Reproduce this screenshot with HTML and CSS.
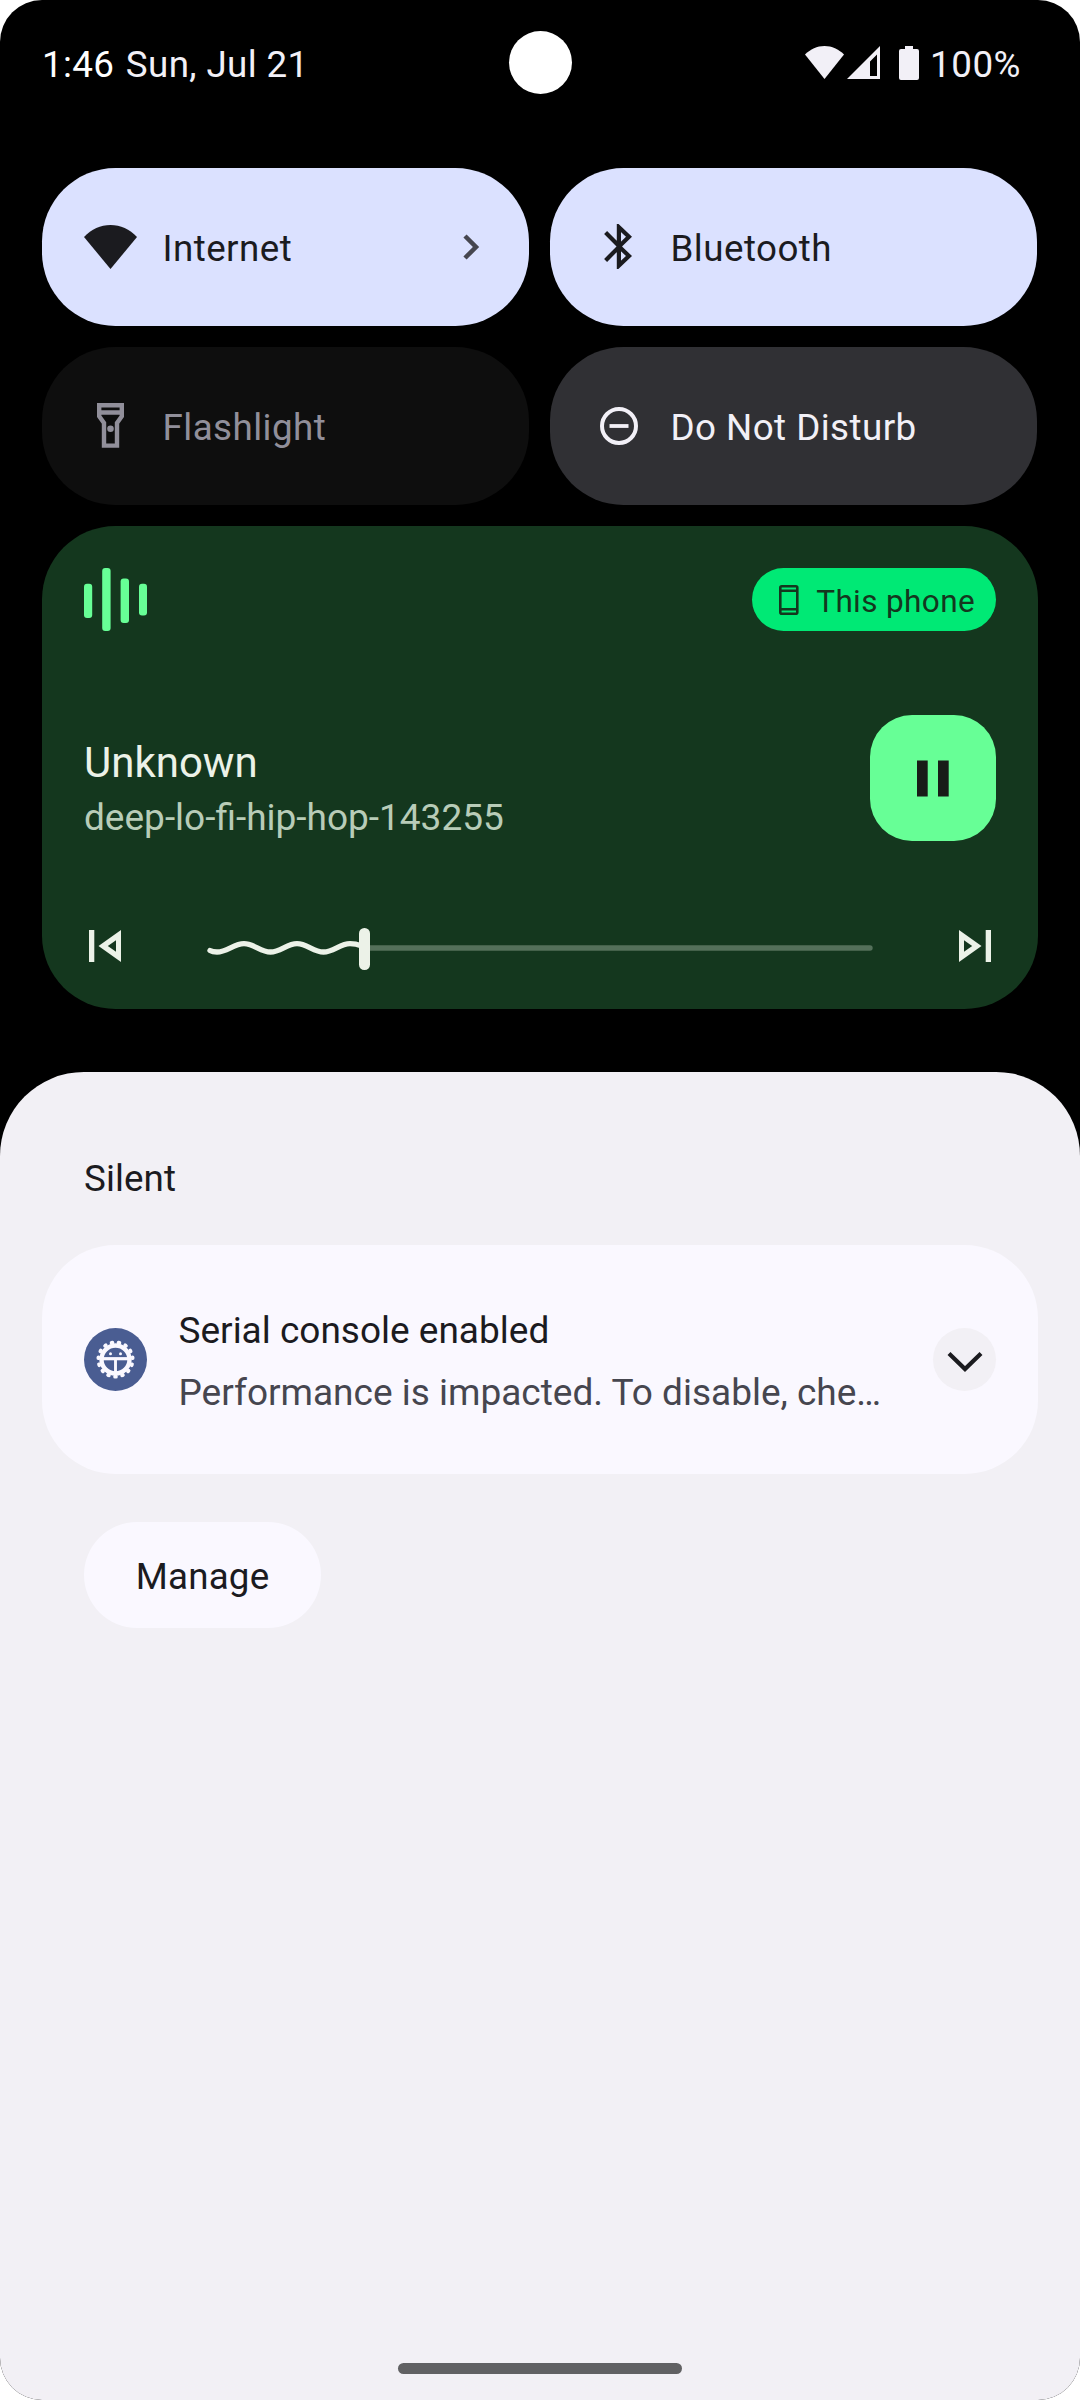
FILE: index.html
```html
<!DOCTYPE html>
<html lang="en">
<head>
<meta charset="utf-8">
<title>Notification shade</title>
<link rel="stylesheet" href="styles.css">
</head>
<body>
<div class="screen">
  <header class="status">
    <div class="clock"><span class="time">1:46</span> <span class="date">Sun, Jul 21</span></div>
    <div class="camera"></div>
    <div class="system">
      <svg class="s-wifi" width="39" height="33" viewBox="0 0 39 33"><path d="M0 8.600C5.500 3 12 0 19.500 0S33.500 3 39 8.600L19.500 33z" fill="currentColor"/></svg>
      <svg class="s-cell" width="33" height="33" viewBox="0 0 33 33"><path fill-rule="evenodd" d="M33 0V33H0zM30 8.500L23 15.500V30H30z" fill="currentColor"/></svg>
      <svg class="s-batt" width="20" height="34" viewBox="0 0 20 34"><path d="M6 0h8v3h4a2 2 0 0 1 2 2v27a2 2 0 0 1-2 2H2a2 2 0 0 1-2-2V5a2 2 0 0 1 2-2h4z" fill="currentColor"/></svg>
      <span class="percent">100%</span>
    </div>
  </header>

  <section class="tiles">
    <div class="tile on">
      <span class="tile-icon"><svg width="53" height="44" viewBox="0 0 53 44"><path d="M0 12C7.500 4 16.500 0 26.500 0S45.500 4 53 12L26.500 44z" fill="currentColor"/></svg></span>
      <span class="label">Internet</span>
      <svg class="chevron" width="17" height="26" viewBox="0 0 17 26"><path d="M2 2L13 13L2 24" fill="none" stroke="currentColor" stroke-width="4.500"/></svg>
    </div>
    <div class="tile on">
      <span class="tile-icon bluetooth"><svg width="28" height="45" viewBox="0 0 28 45"><path d="M1.600 8.400L15.500 22.400L1.600 36.400M15 22.400L25 12.800L14.900 3.200V41.600L25 32L15 22.400" fill="none" stroke="currentColor" stroke-width="4.200"/></svg></span>
      <span class="label">Bluetooth</span>
    </div>
    <div class="tile disabled">
      <span class="tile-icon"><svg width="27" height="45" viewBox="0 0 27 45"><path d="M2.200 2.200H24.800V13.300L20 20V42.600H7V20L2.200 13.300zM2.200 9.500H24.800" fill="none" stroke="currentColor" stroke-width="4.400"/><circle cx="13.500" cy="25.800" r="3.300" fill="currentColor"/></svg></span>
      <span class="label">Flashlight</span>
    </div>
    <div class="tile off">
      <span class="tile-icon"><svg width="38" height="38" viewBox="0 0 38 38"><circle cx="19" cy="19" r="17" fill="none" stroke="currentColor" stroke-width="4"/><path d="M9.500 19H28.500" stroke="currentColor" stroke-width="3.800"/></svg></span>
      <span class="label">Do Not Disturb</span>
    </div>
  </section>

  <section class="media">
    <div class="media-top">
      <svg width="63" height="63" viewBox="0 0 63 63" fill="#67ff96"><rect x="0" y="15.700" width="8.200" height="34.300" rx="3"/><rect x="18.200" y="0" width="8.400" height="63" rx="3"/><rect x="36.600" y="10.500" width="8.400" height="44.500" rx="3"/><rect x="55" y="15.700" width="8" height="31.800" rx="3"/></svg>
      <div class="chip">
        <svg width="20" height="30" viewBox="0 0 20 30"><rect x="1.300" y="1.300" width="17" height="27.400" rx="1.500" fill="none" stroke="currentColor" stroke-width="2.600"/><path d="M1 5.800H19M1 24.200H19" stroke="currentColor" stroke-width="2.400"/></svg>
        <span class="chip-label">This phone</span>
      </div>
    </div>
    <div class="media-mid">
      <div class="track">
        <div class="track-title">Unknown</div>
        <div class="track-artist">deep-lo-fi-hip-hop-143255</div>
      </div>
      <div class="pause"><svg width="32" height="37" viewBox="0 0 32 37"><path d="M0 .5h10.700v36H0zM21 .5h10.700v36H21z" fill="#181d18"/></svg></div>
    </div>
    <div class="media-bottom">
      <svg class="skip" width="32" height="32" viewBox="0 0 32 32"><path fill-rule="evenodd" d="M0 0h5.300v32H0zM32 0V32L9.500 16zM27 10.200L18.800 16L27 21.800z" fill="currentColor"/></svg>
      <svg class="seek" width="668" height="42" viewBox="0 0 668 42"><path d="M160 20H665" stroke="#54705a" stroke-width="5.400" stroke-linecap="round"/><path d="M5 22.500C7 23.700 9.500 24 12 24C22 24 29 15.700 39 15.700S55.500 24 65.500 24S82 15.700 92 15.700S108.500 24 118.500 24S135 15.700 145 15.700C149 15.700 153 16.600 157 18" fill="none" stroke="currentColor" stroke-width="5.300" stroke-linecap="round"/><rect x="154" y="0" width="11" height="42" rx="5.300" fill="currentColor"/></svg>
      <svg class="skip" width="32" height="32" viewBox="0 0 32 32"><path fill-rule="evenodd" d="M26.700 0H32V32H26.700zM0 0V32L22.500 16zM5 10.200L13.200 16L5 21.800z" fill="currentColor"/></svg>
    </div>
  </section>

  <main class="sheet">
    <h2 class="section-title">Silent</h2>
    <article class="note">
      <svg class="note-icon" width="63" height="63" viewBox="0 0 63 63"><circle cx="31.500" cy="31.500" r="31.500" fill="#4a5d92"/><circle cx="31.500" cy="31.500" r="14" fill="none" stroke="#faf8ff" stroke-width="4.400"/><circle cx="31.500" cy="31.500" r="17.200" pathLength="90" fill="none" stroke="#faf8ff" stroke-width="3.700" stroke-linecap="round" stroke-dasharray="0.8 5.200" stroke-dashoffset="1.900"/><path d="M18 30.700H45" stroke="#faf8ff" stroke-width="3.200"/><path d="M31.500 31V45" stroke="#faf8ff" stroke-width="2.900"/><circle cx="26.500" cy="25.700" r="1.500" fill="#faf8ff"/><circle cx="36.500" cy="25.700" r="1.500" fill="#faf8ff"/></svg>
      <div class="note-body">
        <div class="note-title">Serial console enabled</div>
        <div class="note-text">Performance is impacted. To disable, che…</div>
      </div>
      <div class="expand"><svg width="36" height="22" viewBox="0 0 36 22"><path d="M2 2.500L18 18L34 2.500" fill="none" stroke="currentColor" stroke-width="4.200"/></svg></div>
    </article>
    <button class="manage">Manage</button>
    <div class="home"></div>
  </main>
</div>
</body>
</html>
```
FILE: styles.css
```css
* { box-sizing: border-box; }
body {
  margin: 0;
  background: #fff;
  font-family: Roboto, "Liberation Sans", sans-serif;
  font-size: 36.75px;
  line-height: 44px;
  color: #1b1b1f;
}
svg { display: block; flex: none; }
.screen {
  display: flex;
  flex-direction: column;
  width: 1080px;
  height: 2400px;
  background: #000;
  border-radius: 42px;
  overflow: hidden;
}
.status {
  display: grid;
  flex: none;
  grid-template-columns: 1fr 63px 1fr;
  align-items: center;
  height: 125px;
  padding: 0 59px 0 42px;
  color: #f2f0f7;
}
.clock { padding-top: 5px; white-space: nowrap; letter-spacing: .37px; }
.time { margin-right: 2px; color: #fff; }
.camera { width: 63px; height: 63px; border-radius: 50%; background: #fff; margin-left: 8.5px; }
.system { display: flex; align-items: center; justify-content: flex-end; }
.s-wifi { margin-right: 3px; }
.s-cell { margin-right: 19px; }
.s-batt { margin-right: 11px; }
.percent { padding-top: 5px; letter-spacing: .5px; }
.tiles {
  display: grid;
  flex: none;
  grid-template-columns: 487px 487px;
  grid-auto-rows: 158px;
  gap: 21px;
  padding: 43px 42px 21px;
}
.tile {
  display: flex;
  align-items: center;
  padding: 0 49px 0 42px;
  border-radius: 73.5px;
}
.tile-icon { display: flex; justify-content: center; width: 53px; margin: -1px 25.5px 0 0; }
.bluetooth { padding-right: 2px; }
.label { flex: 1; padding-top: 4px; letter-spacing: .45px; }
.on { background: #dbe1ff; }
.chevron { color: #46464f; }
.disabled { background: #0e0e0e; color: #918f9a; }
.off { background: #303034; color: #f2f0f7; }
.media {
  display: flex;
  flex: none;
  flex-direction: column;
  height: 483px;
  margin: 0 42px;
  padding: 42px;
  border-radius: 73.5px;
  background: #14371e;
  color: #ecf2e8;
}
.media-top, .media-mid, .media-bottom { display: flex; align-items: center; justify-content: space-between; }
.chip {
  display: flex;
  align-items: center;
  gap: 17px;
  height: 63px;
  padding: 0 21px 0 27px;
  border-radius: 31.5px;
  background: #00e975;
  color: #14371e;
  font-size: 31.5px;
}
.chip-label { padding-top: 4px; letter-spacing: .38px; }
.media-mid { margin-top: 84px; }
.track { align-self: flex-end; }
.track-title { padding-bottom: 5px; font-size: 42px; line-height: 54px; }
.track-artist { color: #b8ccb8; font-size: 37px; line-height: 46px; }
.pause {
  display: flex;
  align-items: center;
  justify-content: center;
  width: 126px;
  height: 126px;
  border-radius: 42px;
  background: #67ff96;
}
.media-bottom { align-items: flex-start; margin-top: 84px; padding: 0 5px; }
.skip { margin-top: 5px; }
.seek { margin: 3px 2px 0 0; }
.sheet {
  display: flex;
  flex: 1;
  flex-direction: column;
  margin-top: 63px;
  padding: 83px 42px 26px;
  border-radius: 84px 84px 0 0;
  background: #f2f0f5;
}
.section-title { margin: 0 42px; font-size: 36.75px; font-weight: 400; line-height: 48px; letter-spacing: .1px; }
.note {
  display: flex;
  align-items: center;
  height: 229px;
  margin-top: 42px;
  padding: 0 42px;
  border-radius: 73.5px;
  background: #faf8ff;
}
.note-icon { margin-right: 31.5px; }
.note-body { flex: 1; padding-top: 4px; font-size: 37px; line-height: 62px; white-space: nowrap; }
.note-text { color: #46464f; }
.expand {
  display: flex;
  align-items: center;
  justify-content: center;
  width: 63px;
  height: 63px;
  padding-top: 4px;
  border-radius: 50%;
  background: #f2f0f5;
}
.manage {
  align-self: flex-start;
  width: 237px;
  height: 106px;
  margin: 48px 0 0 42px;
  padding: 4px 0 0;
  border: 0;
  border-radius: 53px;
  background: #faf8ff;
  color: inherit;
  font: inherit;
  letter-spacing: .2px;
}
.home { width: 284px; height: 11px; margin: auto auto 0; border-radius: 5.5px; background: #616163; }
```
